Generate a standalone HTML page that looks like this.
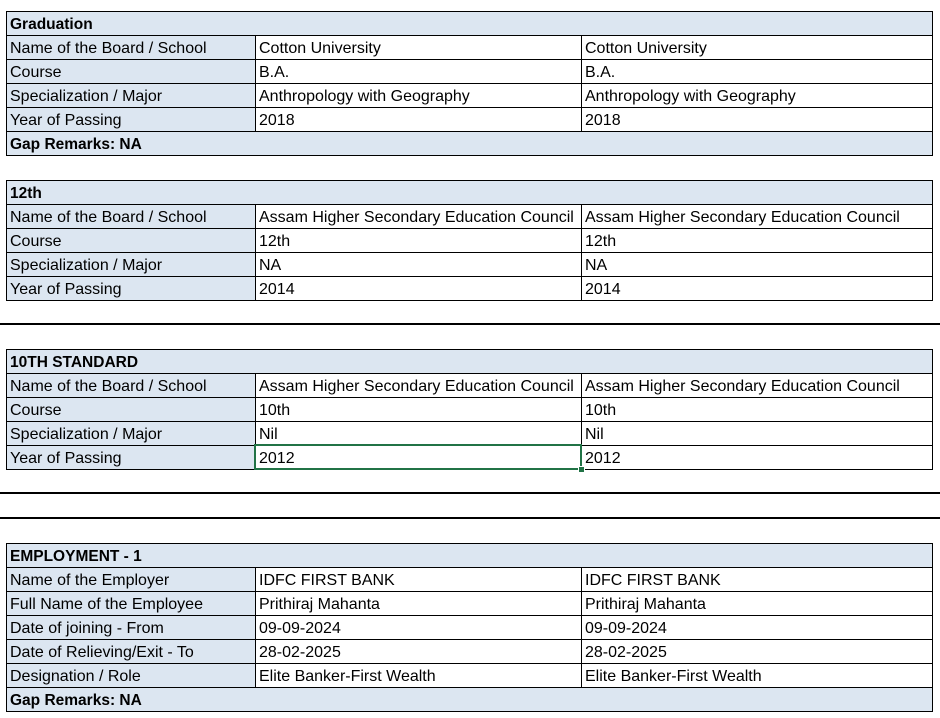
<!DOCTYPE html>
<html><head><meta charset="utf-8"><style>
body{margin:0;width:940px;height:718px;background:#fff;position:relative;overflow:hidden;font-family:"Liberation Sans",Arial,sans-serif;font-size:16px;color:#000}
table{position:absolute;left:6px;border-collapse:collapse;table-layout:fixed;width:926px}
td{border:1px solid #000;height:23px;padding:2px 0 0 3px;white-space:nowrap;overflow:hidden;line-height:21px;box-sizing:border-box}
td.l{background:#dce6f1}
td.h{background:#dce6f1;font-weight:bold;font-size:15.5px}
.line{position:absolute;left:0;width:940px;height:2px;background:#000}
.sel{position:absolute;left:254px;top:444px;width:324px;height:22px;border:2px solid #217346}
.hd{position:absolute;left:578px;top:466px;width:5px;height:5px;background:#217346;border:1px solid #fff}
</style></head><body>
<table style="top:11px"><colgroup><col style="width:249px"><col style="width:326px"><col style="width:351px"></colgroup>
<tr><td class="h" colspan="3">Graduation</td></tr>
<tr><td class="l">Name of the Board / School</td><td>Cotton University</td><td>Cotton University</td></tr>
<tr><td class="l">Course</td><td>B.A.</td><td>B.A.</td></tr>
<tr><td class="l">Specialization / Major</td><td>Anthropology with Geography</td><td>Anthropology with Geography</td></tr>
<tr><td class="l">Year of Passing</td><td>2018</td><td>2018</td></tr>
<tr><td class="h" colspan="3">Gap Remarks: NA</td></tr>
</table>
<table style="top:180px"><colgroup><col style="width:249px"><col style="width:326px"><col style="width:351px"></colgroup>
<tr><td class="h" colspan="3">12th</td></tr>
<tr><td class="l">Name of the Board / School</td><td>Assam Higher Secondary Education Council</td><td>Assam Higher Secondary Education Council</td></tr>
<tr><td class="l">Course</td><td>12th</td><td>12th</td></tr>
<tr><td class="l">Specialization / Major</td><td>NA</td><td>NA</td></tr>
<tr><td class="l">Year of Passing</td><td>2014</td><td>2014</td></tr>
</table>
<div class="line" style="top:323px"></div>
<table style="top:349px"><colgroup><col style="width:249px"><col style="width:326px"><col style="width:351px"></colgroup>
<tr><td class="h" colspan="3">10TH STANDARD</td></tr>
<tr><td class="l">Name of the Board / School</td><td>Assam Higher Secondary Education Council</td><td>Assam Higher Secondary Education Council</td></tr>
<tr><td class="l">Course</td><td>10th</td><td>10th</td></tr>
<tr><td class="l">Specialization / Major</td><td>Nil</td><td>Nil</td></tr>
<tr><td class="l">Year of Passing</td><td>2012</td><td>2012</td></tr>
</table>
<div class="sel"></div><div class="hd"></div>
<div class="line" style="top:492px"></div>
<div class="line" style="top:517px"></div>
<table style="top:543px"><colgroup><col style="width:249px"><col style="width:326px"><col style="width:351px"></colgroup>
<tr><td class="h" colspan="3">EMPLOYMENT - 1</td></tr>
<tr><td class="l">Name of the Employer</td><td>IDFC FIRST BANK</td><td>IDFC FIRST BANK</td></tr>
<tr><td class="l">Full Name of the Employee</td><td>Prithiraj Mahanta</td><td>Prithiraj Mahanta</td></tr>
<tr><td class="l">Date of joining - From</td><td>09-09-2024</td><td>09-09-2024</td></tr>
<tr><td class="l">Date of Relieving/Exit - To</td><td>28-02-2025</td><td>28-02-2025</td></tr>
<tr><td class="l">Designation / Role</td><td>Elite Banker-First Wealth</td><td>Elite Banker-First Wealth</td></tr>
<tr><td class="h" colspan="3">Gap Remarks: NA</td></tr>
</table>
</body></html>
